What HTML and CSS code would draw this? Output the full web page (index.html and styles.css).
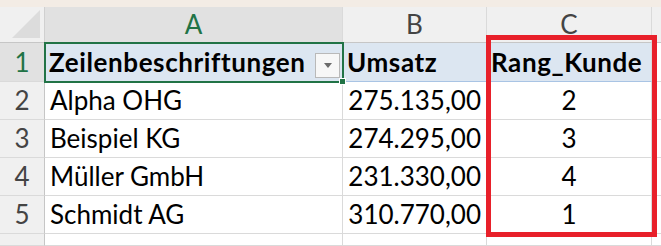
FILE: index.html
```html
<!DOCTYPE html>
<html>
<head>
<meta charset="utf-8">
<link rel="stylesheet" href="styles.css">
</head>
<body>
<div class="top"></div>
<div class="sheet">
  <div class="corner"><div class="tri"></div></div>
  <div class="colhead sel">A</div>
  <div class="colhead">B</div>
  <div class="colhead">C</div>
  <div class="colhead last"></div>

  <div class="rowhead sel">1</div>
  <div class="cell ph active"><span>Zeilenbeschriftungen</span><span class="dd"><svg width="8" height="5" viewBox="0 0 8 5"><path d="M0 0h8L4 5z" fill="#6b6b6b"/></svg></span><span class="handle"></span></div>
  <div class="cell ph">Umsatz</div>
  <div class="cell ph">Rang_Kunde</div>
  <div class="cell"></div>

  <div class="rowhead">2</div>
  <div class="cell">Alpha OHG</div>
  <div class="cell num">275.135,00</div>
  <div class="cell mid">2</div>
  <div class="cell"></div>

  <div class="rowhead">3</div>
  <div class="cell">Beispiel KG</div>
  <div class="cell num">274.295,00</div>
  <div class="cell mid">3</div>
  <div class="cell"></div>

  <div class="rowhead">4</div>
  <div class="cell">Müller GmbH</div>
  <div class="cell num">231.330,00</div>
  <div class="cell mid">4</div>
  <div class="cell"></div>

  <div class="rowhead">5</div>
  <div class="cell">Schmidt AG</div>
  <div class="cell num">310.770,00</div>
  <div class="cell mid">1</div>
  <div class="cell"></div>

  <div class="rowhead"></div>
  <div class="cell"></div>
  <div class="cell"></div>
  <div class="cell"></div>
  <div class="cell"></div>

  <div class="mark"></div>
</div>
</body>
</html>
```
FILE: styles.css
```css
* { box-sizing: border-box; }
html, body { margin: 0; padding: 0; background: #ffffff; overflow: hidden; }
body { width: 661px; height: 246px; font-family: "Lato", "Open Sans", sans-serif; color: #000; }
.top { height: 7px; background: #f3ece5; }
.sheet {
  position: relative;
  display: grid;
  grid-template-columns: 45px 298px 144px 165px 1fr;
  grid-template-rows: 36px 39px 38px 38px 38px 38px 1fr;
  height: 239px;
}
.corner { background: #f0f0f0; border-right: 1px solid #d0d0d0; border-bottom: 1px solid #c6c6c6; position: relative; }
.tri { position: absolute; right: 4px; bottom: 4px; width: 0; height: 0; border-left: 28px solid transparent; border-bottom: 28px solid #dcdcdc; }
.colhead {
  background: #f0f0f0; border-right: 1px solid #dadada; border-bottom: 1px solid #c6c6c6;
  display: flex; align-items: flex-end; justify-content: center; padding-bottom: 2px;
  font-size: 26px; color: #444;
}
.colhead.sel { background: #e1e1e1; color: #217346; border-bottom: 1px solid #c6c6c6; }
.colhead.last { border-right: none; }
.rowhead {
  background: #f0f0f0; border-right: 1px solid #c6c6c6; border-bottom: 1px solid #dadada;
  display: flex; align-items: flex-end; justify-content: center; padding-bottom: 3px;
  font-size: 26px; color: #444;
}
.rowhead.sel { background: #e1e1e1; color: #217346; }
.cell {
  border-right: 1px solid #dadada; border-bottom: 1px solid #dadada;
  display: flex; align-items: flex-end; padding: 0 5px 3px 5px;
  font-size: 26px; white-space: nowrap; position: relative;
}
.cell.ph { background: #dce6f1; border-bottom: 1px solid #a9c4e4; font-weight: 700; letter-spacing: 0.6px; padding-left: 4px; }
.cell.num { justify-content: flex-end; }
.cell.mid { justify-content: center; }
.cell.active { outline: 2px solid #217346; outline-offset: -1px; justify-content: space-between; padding-right: 2px; z-index: 1; }
.dd {
  width: 25px; height: 25px; background: #f7f7f7; border: 1px solid #b9b9b9;
  display: flex; align-items: center; justify-content: center;
}
.handle { position: absolute; right: -4px; bottom: -4px; width: 7px; height: 7px; background: #217346; border: 1px solid #fff; }
.mark {
  position: absolute; left: 486px; top: 28px; width: 171px; height: 202px;
  border: 5px solid #e8202a; pointer-events: none; z-index: 2;
}
```
